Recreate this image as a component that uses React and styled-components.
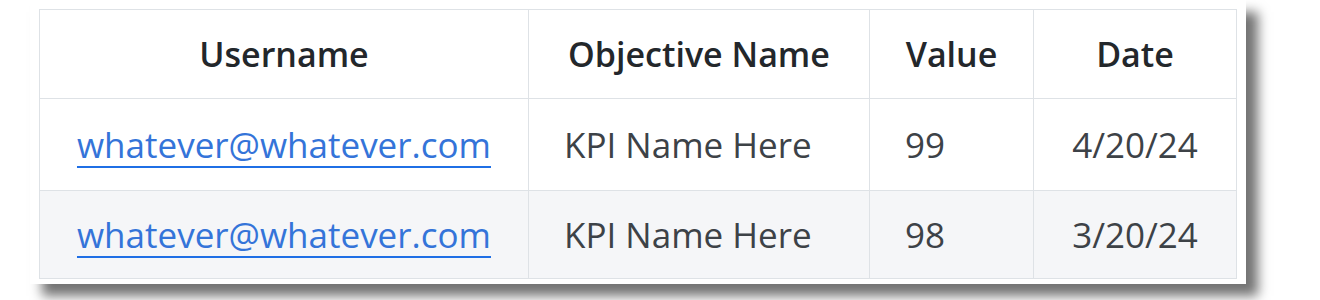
import styled, { createGlobalStyle } from 'styled-components';

const GlobalStyle = createGlobalStyle`
  body {
    margin: 0;
    background: #fff;
    font-family: "Open Sans", "Noto Sans", sans-serif;
  }
`;

const rows = [
  { user: 'whatever@whatever.com', objective: 'KPI Name Here', value: 99, date: '4/20/24' },
  { user: 'whatever@whatever.com', objective: 'KPI Name Here', value: 98, date: '3/20/24' },
];

const columns = [
  { key: 'user', label: 'Username', width: 489 },
  { key: 'objective', label: 'Objective Name', width: 341 },
  { key: 'value', label: 'Value', width: 164 },
  { key: 'date', label: 'Date', width: 203 },
];

const App = () => (
  <>
    <GlobalStyle />
    <Page>
      <Card>
        <Table>
          <colgroup>
            {columns.map((c) => (
              <col key={c.key} style={{ width: c.width }} />
            ))}
          </colgroup>
          <thead>
            <tr>
              {columns.map((c) => (
                <HeadCell key={c.key}>{c.label}</HeadCell>
              ))}
            </tr>
          </thead>
          <tbody>
            {rows.map((r, i) => (
              <Row key={i} $striped={i % 2 === 1} $height={i === 0 ? 92 : 88}>
                <Cell $center>
                  <UserLink href="#">{r.user}</UserLink>
                </Cell>
                <Cell>{r.objective}</Cell>
                <Cell>{r.value}</Cell>
                <Cell $center>{r.date}</Cell>
              </Row>
            ))}
          </tbody>
        </Table>
      </Card>
    </Page>
  </>
);

export default App;

const Page = styled.div`
  padding: 0 0 0 30px;
  height: 300px;
`;

const Card = styled.div`
  display: inline-block;
  background: #fff;
  padding: 9px 9px 5px 9px;
  box-shadow: 12px 12px 11px rgba(0, 0, 0, 0.55);
`;

const Table = styled.table`
  border-collapse: collapse;
  table-layout: fixed;
  width: 1197px;
  border: 1px solid #dee2e6;
`;

const HeadCell = styled.th`
  height: 88px;
  padding: 0 20px;
  border: 1px solid #dee2e6;
  font-size: 34px;
  font-weight: 600;
  color: #23272b;
  text-align: center;
  white-space: nowrap;
`;

const Row = styled.tr`
  height: ${(p) => p.$height}px;
  background: ${(p) => (p.$striped ? '#f5f6f8' : '#fff')};
`;

const Cell = styled.td`
  padding: 0 35px;
  border: 1px solid #dee2e6;
  font-size: 35px;
  color: #3d4247;
  text-align: ${(p) => (p.$center ? 'center' : 'left')};
  white-space: nowrap;
`;

const UserLink = styled.a`
  color: #3474d9;
  text-decoration: underline;
  text-decoration-thickness: 2px;
  text-underline-offset: 8px;
  text-decoration-color: #1f6fe5;
`;
